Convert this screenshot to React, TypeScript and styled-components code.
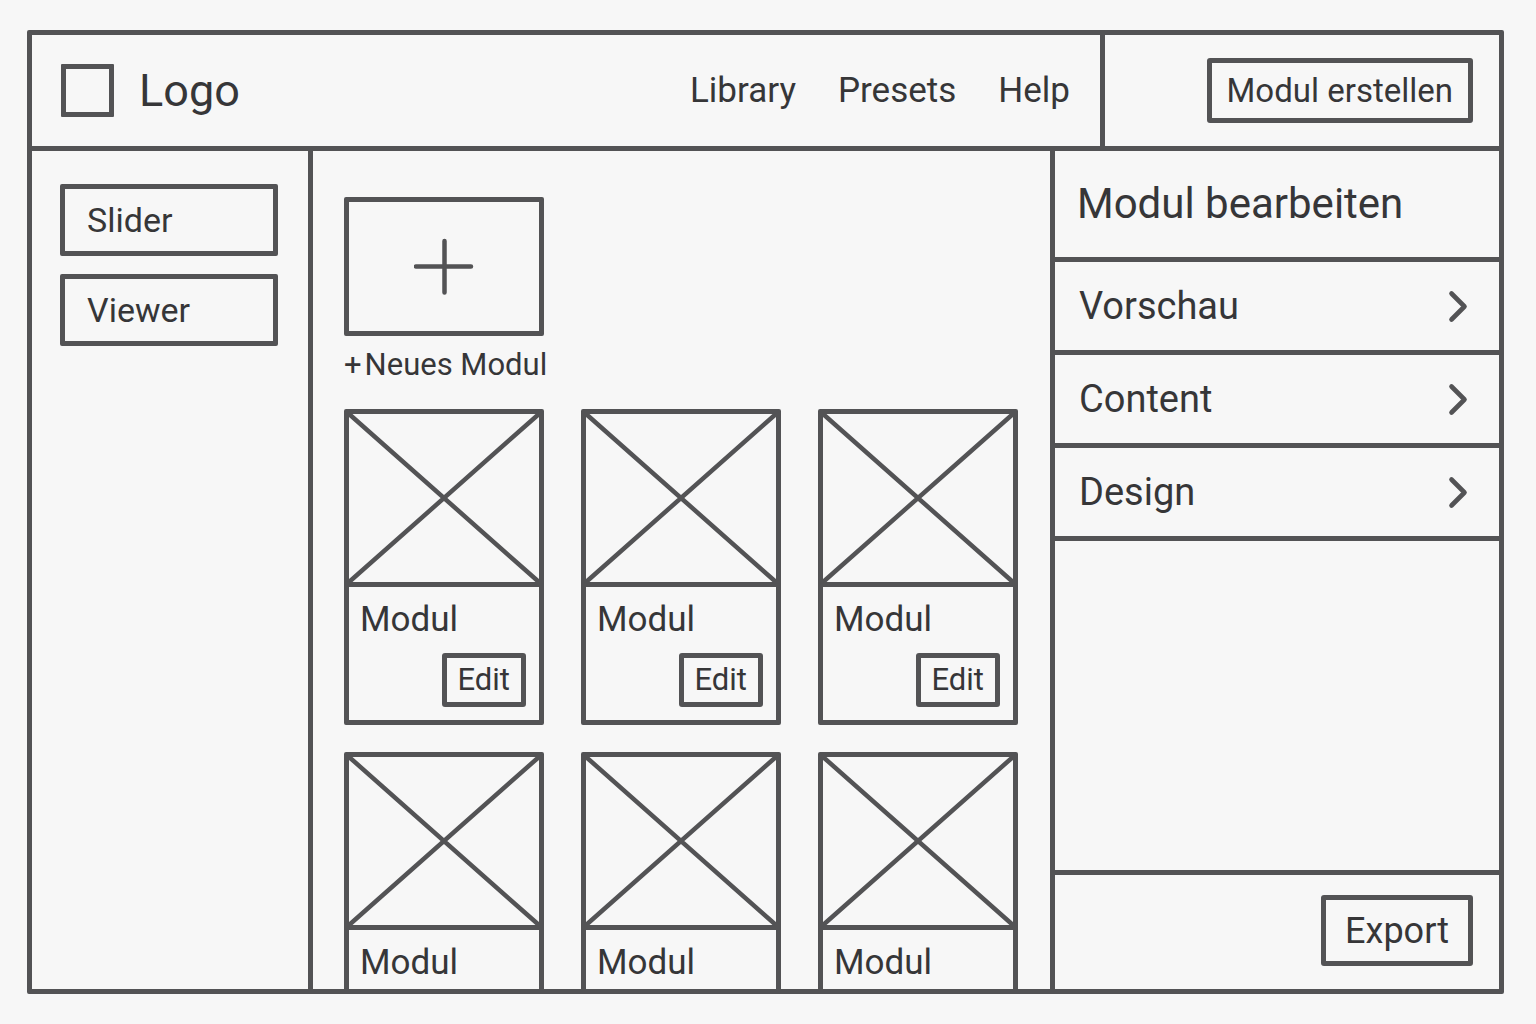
import React from "react";
import styled, { createGlobalStyle, css } from "styled-components";

const line = "#535355";
const ink = "#363638";
const paper = "#f7f7f7";
const stroke = `5px solid ${line}`;

const GlobalStyle = createGlobalStyle`
  *, *::before, *::after { box-sizing: border-box; }
  body {
    margin: 0;
    background: ${paper};
    color: ${ink};
    font-family: Roboto, "Liberation Sans", sans-serif;
  }
  button {
    margin: 0;
    padding: 0;
    border: 0;
    background: none;
    color: inherit;
    font: inherit;
    cursor: pointer;
  }
  h1, h2, h3, p, ul { margin: 0; padding: 0; font-weight: 400; }
  ul { list-style: none; }
`;

const Page = styled.div`
  display: flex;
  height: 100vh;
  padding: 30px 32px 30px 27px;
`;

const Frame = styled.div`
  display: flex;
  flex: 1;
  flex-direction: column;
  min-width: 0;
  border: ${stroke};
  border-radius: 2px;
`;

const Header = styled.header`
  display: flex;
  flex: none;
  height: 116px;
  border-bottom: ${stroke};
`;

const Brand = styled.div`
  display: flex;
  flex: 1;
  align-items: center;
  gap: 25px;
  padding-left: 29px;
`;

const BrandMark = styled.span`
  width: 53px;
  height: 53px;
  border: ${stroke};
  border-radius: 1px;
`;

const BrandName = styled.h1`
  font-size: 45px;
  line-height: 54px;
`;

const Nav = styled.nav`
  display: flex;
  align-items: center;
  gap: 42px;
  padding-right: 30px;
`;

const NavLink = styled.a`
  color: inherit;
  font-size: 35px;
  line-height: 40px;
  text-decoration: none;
`;

const HeaderAction = styled.div`
  display: flex;
  align-items: center;
  justify-content: flex-end;
  width: 399px;
  padding-right: 26px;
  border-left: ${stroke};
`;

type Size = "small" | "medium" | "large";

const sizes = {
  small: css`
    height: 54px;
    padding: 0 11px;
    font-size: 31px;
  `,
  medium: css`
    height: 65px;
    padding: 0 15px;
    font-size: 33px;
  `,
  large: css`
    height: 71px;
    padding: 0 19px;
    font-size: 36px;
  `,
};

const OutlineButton = styled.button<{ $size: Size }>`
  && {
    border: ${stroke};
    border-radius: 3px;
    line-height: 40px;
    white-space: nowrap;
    ${({ $size }) => sizes[$size]}
  }
`;

const Body = styled.div`
  display: flex;
  flex: 1;
  min-height: 0;
`;

const Sidebar = styled.aside`
  display: flex;
  flex: none;
  flex-direction: column;
  gap: 18px;
  width: 281px;
  padding: 33px 30px 33px 28px;
  border-right: ${stroke};
`;

const SidebarButton = styled.button`
  && {
    height: 72px;
    padding: 0 22px;
    border: ${stroke};
    border-radius: 2px;
    font-size: 34px;
    line-height: 40px;
    text-align: left;
  }
`;

const Main = styled.main`
  flex: 1;
  min-width: 0;
  padding: 46px 32px 0 31px;
  overflow-y: auto;
  scrollbar-width: none;
`;

const ModuleGrid = styled.div`
  display: grid;
  grid-template-columns: repeat(3, minmax(0, 1fr));
  gap: 27px 37px;
`;

const NewModule = styled.button`
  && {
    display: flex;
    flex-direction: column;
    gap: 12px;
  }
`;

const RowBreak = styled.div`
  grid-column: 2 / -1;
`;

const NewTile = styled.span`
  display: flex;
  align-items: center;
  justify-content: center;
  width: 100%;
  height: 139px;
  border: ${stroke};
  border-radius: 2px;
`;

const NewLabel = styled.span`
  display: flex;
  gap: 3px;
  font-size: 31px;
  line-height: 34px;
  white-space: nowrap;
`;

const Card = styled.article`
  border: ${stroke};
  border-radius: 2px;
`;

const Thumb = styled.svg`
  display: block;
  width: 100%;
  height: 173px;
  border-bottom: ${stroke};
`;

const CardBody = styled.div`
  display: flex;
  flex-direction: column;
  gap: 13px;
  padding: 13px 13px 13px 11px;
`;

const CardTitle = styled.h3`
  font-size: 35px;
  line-height: 40px;
`;

const CardActions = styled.div`
  display: flex;
  justify-content: flex-end;
`;

const Panel = styled.aside`
  display: flex;
  flex: none;
  flex-direction: column;
  width: 449px;
  border-left: ${stroke};
`;

const PanelTitle = styled.h2`
  padding: 28px 22px;
  border-bottom: ${stroke};
  font-size: 42px;
  line-height: 50px;
`;

const PanelSections = styled.ul`
  flex: 1;
`;

const SectionButton = styled.button`
  && {
    display: flex;
    align-items: center;
    justify-content: space-between;
    width: 100%;
    height: 93px;
    padding: 0 30px 0 24px;
    border-bottom: ${stroke};
    font-size: 38px;
    line-height: 46px;
  }
`;

const PanelFooter = styled.footer`
  display: flex;
  justify-content: flex-end;
  padding: 20px 26px 23px;
  border-top: ${stroke};
`;

const PlusIcon = () => (
  <svg width="60" height="60" viewBox="0 0 60 60" fill="none" stroke={line} strokeWidth="4.5" strokeLinecap="round" aria-hidden="true">
    <path d="M2 29.5h55M30.5 4v51.5" />
  </svg>
);

const ChevronIcon = () => (
  <svg width="22" height="34" viewBox="0 0 22 34" fill="none" stroke={line} strokeWidth="4.6" strokeLinecap="round" strokeLinejoin="round" aria-hidden="true">
    <path d="M4.5 4.5L17.5 17.5L4.5 30.5" />
  </svg>
);

const ModuleCard = ({ title, editable }: { title: string; editable: boolean }) => (
  <Card>
    <Thumb viewBox="0 0 190 168" preserveAspectRatio="none" stroke={line} strokeWidth="4.5" aria-hidden="true">
      <path d="M-1 -1L191 169M191 -1L-1 169" />
    </Thumb>
    <CardBody>
      <CardTitle>{title}</CardTitle>
      {editable && (
        <CardActions>
          <OutlineButton type="button" $size="small">Edit</OutlineButton>
        </CardActions>
      )}
    </CardBody>
  </Card>
);

const navItems = ["Library", "Presets", "Help"];
const moduleTypes = ["Slider", "Viewer"];
const modules = Array.from({ length: 6 }, (_, id) => ({
  id,
  title: "Modul",
  editable: id < 3,
}));
const sections = ["Vorschau", "Content", "Design"];

export default function App() {
  return (
    <>
      <GlobalStyle />
      <Page>
        <Frame>
          <Header>
            <Brand>
              <BrandMark />
              <BrandName>Logo</BrandName>
            </Brand>
            <Nav>
              {navItems.map((item) => (
                <NavLink key={item} href={`#${item.toLowerCase()}`}>{item}</NavLink>
              ))}
            </Nav>
            <HeaderAction>
              <OutlineButton type="button" $size="medium">Modul erstellen</OutlineButton>
            </HeaderAction>
          </Header>
          <Body>
            <Sidebar>
              {moduleTypes.map((type) => (
                <SidebarButton key={type} type="button">{type}</SidebarButton>
              ))}
            </Sidebar>
            <Main>
              <ModuleGrid>
                <NewModule type="button">
                  <NewTile><PlusIcon /></NewTile>
                  <NewLabel><span>+</span><span>Neues Modul</span></NewLabel>
                </NewModule>
                <RowBreak />
                {modules.map(({ id, title, editable }) => (
                  <ModuleCard key={id} title={title} editable={editable} />
                ))}
              </ModuleGrid>
            </Main>
            <Panel>
              <PanelTitle>Modul bearbeiten</PanelTitle>
              <PanelSections>
                {sections.map((section) => (
                  <li key={section}>
                    <SectionButton type="button" aria-expanded={false}>
                      {section}
                      <ChevronIcon />
                    </SectionButton>
                  </li>
                ))}
              </PanelSections>
              <PanelFooter>
                <OutlineButton type="button" $size="large">Export</OutlineButton>
              </PanelFooter>
            </Panel>
          </Body>
        </Frame>
      </Page>
    </>
  );
}
